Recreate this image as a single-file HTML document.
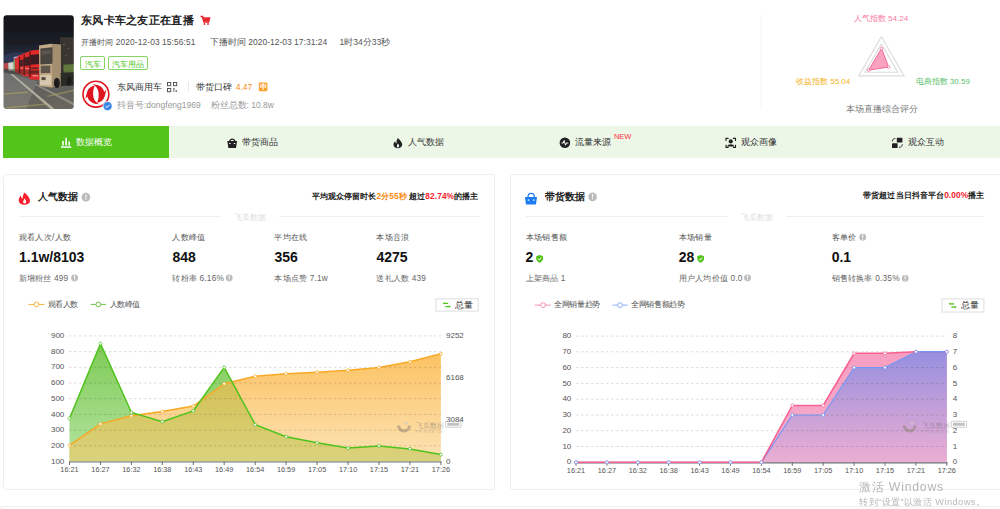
<!DOCTYPE html>
<html><head><meta charset="utf-8">
<style>
*{margin:0;padding:0;box-sizing:border-box}
html,body{width:1000px;height:509px;overflow:hidden;background:#fff;font-family:"Liberation Sans", sans-serif;color:#333}
.a{position:absolute;white-space:nowrap;line-height:1}
svg{position:absolute;left:0;top:0}
svg text{font-family:"Liberation Sans", sans-serif}
.ax{font-size:7.3px;fill:#555}
.ay{font-size:8px;fill:#555}
.wm{font-size:7.4px;letter-spacing:0.2px;fill:#777;fill-opacity:0.55}
.wm2{font-size:3.2px;letter-spacing:1.2px;fill:#888;fill-opacity:0.5}
.card{position:absolute;border:1px solid #efefef;border-radius:3px;background:#fff}
.tabs{position:absolute;left:3px;top:126px;width:997px;height:32px;background:#edf7e8}
.tab{position:absolute;top:0;height:32px;width:166.17px}
.t85{font-size:8.5px}
.lbl{font-size:8.3px;letter-spacing:0.35px;color:#555}
.val{font-size:14px;font-weight:bold;color:#111}
.sub{font-size:8.3px;letter-spacing:0.2px;color:#666}
.leg{font-size:7.6px;letter-spacing:-0.4px;color:#555}
</style></head><body>
<!-- cards -->
<div class="card" style="left:3px;top:173.5px;width:491.5px;height:316.5px"></div>
<div class="card" style="left:509.8px;top:173.5px;width:492px;height:316.5px"></div>
<div class="card" style="left:0px;top:505.5px;width:1002px;height:30px"></div>
<!-- tabs -->
<div class="tabs">
 <div class="tab" style="left:0;background:#52c41a"></div>
</div>
<svg width="1000" height="509" viewBox="0 0 1000 509">
<defs>
<filter id="blr" x="-0.1" y="-0.1" width="1.2" height="1.2"><feGaussianBlur stdDeviation="5"/></filter>
<clipPath id="ph"><rect x="3.5" y="15.2" width="70.3" height="93.8" rx="3"/></clipPath>
<linearGradient id="sky" x1="0" y1="-180" x2="0" y2="200" gradientUnits="userSpaceOnUse"><stop offset="0" stop-color="#141519"/><stop offset="0.5" stop-color="#1a1c24"/><stop offset="0.85" stop-color="#282e40"/><stop offset="1" stop-color="#3a4460"/></linearGradient>
<linearGradient id="gnd" x1="0" y1="200" x2="0" y2="510" gradientUnits="userSpaceOnUse"><stop offset="0" stop-color="#56585a"/><stop offset="1" stop-color="#6a675e"/></linearGradient>
</defs>
<g clip-path="url(#ph)"><g transform="translate(3,40) scale(0.137363)" filter="url(#blr)">
<rect x="-20" y="-200" width="560" height="720" fill="url(#sky)"/>
<ellipse cx="110" cy="130" rx="110" ry="40" fill="#3a4a78" fill-opacity="0.45"/>
<ellipse cx="110" cy="130" rx="35" ry="12" fill="#c8d8ff" fill-opacity="0.75"/>
<path d="M-20,200 L540,230 L540,520 L-20,520Z" fill="url(#gnd)"/>
<path d="M-20,220 L250,300 L160,520 L-20,520Z" fill="#8c8c88" fill-opacity="0.45"/>
<path d="M55,250 L70,248 L385,510 L355,510Z" fill="#d0ccb8" fill-opacity="0.7"/>
<path d="M230,325 L245,320 L540,470 L540,490Z" fill="#c0bca8" fill-opacity="0.45"/>
<path d="M-20,390 L180,375 L182,385 L-20,400Z" fill="#b6a660" fill-opacity="0.55"/>
<path d="M20,490 L320,460 L322,470 L20,500Z" fill="#b6a660" fill-opacity="0.55"/>
<path d="M320,405 L540,355 L540,367 L325,415Z" fill="#b6a660" fill-opacity="0.5"/>
<rect x="415" y="-20" width="125" height="350" fill="#3a3631"/>
<rect x="440" y="30" width="8" height="8" fill="#8a8470"/><rect x="470" y="60" width="8" height="8" fill="#7a7460"/><rect x="455" y="110" width="8" height="8" fill="#7a7460"/>
<path d="M440,180 L540,175 L540,255 L440,250Z" fill="#6a8a40" fill-opacity="0.8"/>
<path d="M5,170 L40,165 L42,215 L5,215Z" fill="#b84848"/>
<path d="M38,165 L78,160 L80,222 L40,222Z" fill="#d8d8d0"/>
<path d="M75,150 L88,140 L90,230 L78,228Z" fill="#7ab070"/>
<path d="M85,132 L118,122 L120,240 L88,236Z" fill="#d83030"/>
<path d="M108,115 L152,102 L155,252 L112,248Z" fill="#dd2c2c"/>
<path d="M140,100 L198,82 L200,268 L145,262Z" fill="#e02e2e"/>
<path d="M188,78 L275,70 L275,292 L192,285Z" fill="#e22a2a"/>
<path d="M120,150 L150,142 L150,190 L120,195Z" fill="#4a2228"/>
<path d="M150,130 L195,120 L195,185 L152,190Z" fill="#3e2024"/>
<path d="M198,110 L268,102 L268,175 L198,180Z" fill="#3a1e22"/>
<path d="M195,225 L270,222 L270,240 L195,242Z" fill="#8a1c1c"/>
<path d="M116,125 L124,122 L124,245 L116,242Z" fill="#5a1818"/>
<path d="M150,104 L158,100 L158,258 L150,255Z" fill="#5a1818"/>
<path d="M192,82 L200,80 L200,272 L192,270Z" fill="#4a1414"/>
<rect x="125" y="200" width="22" height="8" fill="#f0c8c0" fill-opacity="0.5"/>
<rect x="160" y="205" width="30" height="9" fill="#f0c8c0" fill-opacity="0.5"/>
<rect x="205" y="200" width="55" height="12" fill="#6a2020"/>
<rect x="215" y="255" width="40" height="10" fill="#f8e0d0" fill-opacity="0.55"/>
<path d="M-20,205 L540,235 L540,270 L-20,240Z" fill="#2a2a2a" fill-opacity="0.35"/>
<path d="M262,40 L350,28 L420,35 L420,330 L350,345 L265,335Z" fill="#c2aa88"/>
<path d="M355,30 L420,35 L420,330 L357,345Z" fill="#a48e70"/>
<path d="M272,62 L360,52 L360,172 L272,178Z" fill="#4a4440"/><path d="M280,80 L350,72 L350,100 L280,105Z" fill="#6a625a" fill-opacity="0.6"/>
<path d="M275,188 L345,185 L345,240 L275,242Z" fill="#5e564c"/>
<path d="M270,258 L352,255 L352,330 L270,328Z" fill="#d6c8ae"/>
<rect x="280" y="270" width="30" height="22" fill="#5a4c42"/>
<path d="M420,240 L540,235 L540,330 L420,335Z" fill="#2a2b28"/>
<ellipse cx="392" cy="312" rx="22" ry="38" fill="#1a1a1a"/>
<ellipse cx="480" cy="300" rx="18" ry="32" fill="#1e1e1e"/>
</g></g>
<path d="M200.5,16.5 L202.5,16.5 L204,22 L208.5,22 L209.5,18 L203,18" fill="none" stroke="#e8262c" stroke-width="1.6"/><circle cx="204.5" cy="24" r="0.9" fill="#e8262c"/><circle cx="208" cy="24" r="0.9" fill="#e8262c"/><rect x="203.3" y="18.2" width="5.6" height="3.2" fill="#e8262c"/>
<circle cx="95.9" cy="94.2" r="12.9" fill="#fff" stroke="#e0141e" stroke-width="1.6"/>
<g transform="translate(95.9,94.2)" fill="#e0141e"><path d="M-3.2,-10 C3,-9.8 7.6,-6.8 8.4,-2.2 L10.6,-4.6 L8.8,2.2 C7.6,6 4.5,8.2 1,8.6 C2.8,5.5 3,1.5 2.6,-2 C2.2,-5.5 0,-8.5 -3.2,-10Z"/><path d="M3.2,10 C-3,9.8 -7.6,6.8 -8.4,2.2 L-10.6,4.6 L-8.8,-2.2 C-7.6,-6 -4.5,-8.2 -1,-8.6 C-2.8,-5.5 -3,-1.5 -2.6,2 C-2.2,5.5 0,8.5 3.2,10Z"/></g>
<circle cx="107.6" cy="106.1" r="4.6" fill="#3a86e8" stroke="#fff" stroke-width="0.8"/><path d="M105.5,106.1 L107,107.5 L109.6,104.8" fill="none" stroke="#fff" stroke-width="1"/>
<rect x="167.5" y="82.5" width="3.2" height="3.2" fill="none" stroke="#555" stroke-width="1"/><rect x="173.5" y="82.5" width="3.2" height="3.2" fill="none" stroke="#555" stroke-width="1"/><rect x="167.5" y="88.5" width="3.2" height="3.2" fill="none" stroke="#555" stroke-width="1"/><rect x="173.2" y="88.2" width="1.5" height="1.5" fill="#555"/><rect x="175.5" y="90.3" width="1.5" height="1.5" fill="#555"/><rect x="173.2" y="90.5" width="1.2" height="1.3" fill="#555"/>
<rect x="188" y="82" width="0.8" height="10" fill="#e3e3e3"/>
<rect x="258.8" y="82.6" width="8.6" height="8.6" rx="1" fill="#fca130"/>
<rect x="760.6" y="15" width="0.8" height="95" fill="#f0f0f0"/>
<polygon points="881.40,36.60 858.71,75.90 904.09,75.90" fill="none" stroke="#dcdcdc" stroke-width="1.1"/>
<polygon points="881.40,43.94 865.06,72.23 897.74,72.23" fill="none" stroke="#dcdcdc" stroke-width="1.1"/>
<polygon points="881.5,48.4 868.7,70.1 888.6,67.0" fill="#f784aa" fill-opacity="0.75" stroke="#f5679a" stroke-width="1"/>
<circle cx="881.5" cy="48.4" r="1.3" fill="#fff" stroke="#f5679a" stroke-width="0.7"/>
<circle cx="868.7" cy="70.1" r="1.3" fill="#fff" stroke="#f5679a" stroke-width="0.7"/>
<circle cx="888.6" cy="67.0" r="1.3" fill="#fff" stroke="#f5679a" stroke-width="0.7"/>
<g fill="#fff"><rect x="61" y="146.3" width="10.2" height="1.5"/><rect x="62.2" y="141" width="1.6" height="4.5"/><rect x="65.3" y="137.8" width="1.6" height="7.7"/><rect x="68.4" y="141.5" width="1.6" height="4"/></g>
<path d="M229.5,141 A3,3.2 0 0 1 235,141" fill="none" stroke="#222" stroke-width="1.1"/><path d="M227.3,141 L237.1,141 L236,148 L228.4,148Z" fill="#222"/><rect x="229.2" y="143" width="1.4" height="1" fill="#fff"/><rect x="233.8" y="143" width="1.4" height="1" fill="#fff"/>
<path d="M397.8,138 C401,141 402.5,143 402.2,145 C402,147 400,148.2 397.8,148.2 C395.5,148.2 393.5,147 393.5,144.8 C393.5,143 394.5,142 395.3,141.3 C395.3,142.5 395.8,143.3 396.5,143.5 C396.3,141.8 396.8,139.5 397.8,138Z" fill="#222"/><path d="M397.9,143.5 C399,145 399.3,146 398.9,147 C398.5,147.6 397.3,147.6 397,147 C396.6,146.2 397.2,145 397.9,143.5Z" fill="#fff"/>
<circle cx="564.9" cy="142.8" r="5.3" fill="#222"/><path d="M561.5,143 L563.3,143 L564.2,140.5 L565.5,145.2 L566.4,143 L568.3,143" fill="none" stroke="#fff" stroke-width="1"/>
<g fill="none" stroke="#222" stroke-width="1.1"><path d="M726,141 L726,138.4 L728.6,138.4"/><path d="M732.9,138.4 L735.5,138.4 L735.5,141"/><path d="M726,144.8 L726,147.4 L728.6,147.4"/><path d="M732.9,147.4 L735.5,147.4 L735.5,144.8"/></g><circle cx="730.75" cy="141.4" r="2.1" fill="#222"/><path d="M727.3,146.6 C727.5,143.6 734,143.6 734.2,146.6Z" fill="#222"/>
<g fill="#222"><rect x="896.8" y="137.8" width="5.6" height="4.8" rx="0.6"/><rect x="892" y="143.2" width="5.6" height="4.8" rx="0.6"/></g><g fill="none" stroke="#222" stroke-width="0.9"><path d="M892.3,141.5 C892.5,139.3 893.5,138.5 895.4,138.5"/><path d="M902.3,144.2 C902.1,146.5 901,147.3 899,147.3"/></g>
<path d="M24.5,192.4 C28.5,196 30.2,198.5 30,201 C29.8,203.5 27.5,204.8 24.5,204.8 C21.5,204.8 18.8,203.3 18.7,200.3 C18.6,198 20,196.5 21,195.5 C21,197.3 21.8,198.4 22.8,198.6 C22.5,196.3 23.2,193.8 24.5,192.4Z" fill="#f5222d"/><path d="M24.6,198.5 C26,200.3 26.4,201.6 26,202.8 C25.6,203.7 23.8,203.7 23.3,202.8 C22.8,201.8 23.5,200.3 24.6,198.5Z" fill="#fff"/>
<circle cx="85.9" cy="197.2" r="4.35" fill="#bbb"/><rect x="85.40" y="194.60" width="1.1" height="3.2" fill="#fff"/><rect x="85.40" y="198.50" width="1.1" height="1.2" fill="#fff"/>
<path d="M528,197 A3.2,3.6 0 0 1 534.4,197" fill="none" stroke="#1d7cf2" stroke-width="1.2"/><path d="M525,197 L537,197 L536,204.5 L526,204.5Z" fill="#1d7cf2"/><rect x="527.8" y="199.5" width="1.5" height="1.2" fill="#fff"/><rect x="533" y="199.5" width="1.5" height="1.2" fill="#fff"/>
<circle cx="592.6" cy="196.8" r="4.35" fill="#bbb"/><rect x="592.00" y="194.20" width="1.1" height="3.2" fill="#fff"/><rect x="592.00" y="198.10" width="1.1" height="1.2" fill="#fff"/>
<circle cx="74.6" cy="278.0" r="3.40" fill="#bbb"/><rect x="74.05" y="275.40" width="1.1" height="3.2" fill="#fff"/><rect x="74.05" y="279.30" width="1.1" height="1.2" fill="#fff"/>
<circle cx="229.2" cy="278.0" r="3.40" fill="#bbb"/><rect x="228.65" y="275.40" width="1.1" height="3.2" fill="#fff"/><rect x="228.65" y="279.30" width="1.1" height="1.2" fill="#fff"/>
<circle cx="862.7" cy="237.2" r="3.40" fill="#bbb"/><rect x="862.15" y="234.60" width="1.1" height="3.2" fill="#fff"/><rect x="862.15" y="238.50" width="1.1" height="1.2" fill="#fff"/>
<circle cx="747.5" cy="277.8" r="3.40" fill="#bbb"/><rect x="746.95" y="275.20" width="1.1" height="3.2" fill="#fff"/><rect x="746.95" y="279.10" width="1.1" height="1.2" fill="#fff"/>
<circle cx="905.2" cy="278.3" r="3.40" fill="#bbb"/><rect x="904.65" y="275.70" width="1.1" height="3.2" fill="#fff"/><rect x="904.65" y="279.60" width="1.1" height="1.2" fill="#fff"/>
<path d="M536.2,256.3 L539.6,255 L543.0,256.3 L543.0,258.8 C543.0,260.8 541.0,262.2 539.6,262.8 C538.2,262.2 536.2,260.8 536.2,258.8Z" fill="#52c41a"/><path d="M537.9000000000001,258.8 L539.2,260 L541.3000000000001,257.6" fill="none" stroke="#fff" stroke-width="0.9"/>
<path d="M697.2,256.3 L700.6,255 L704.0,256.3 L704.0,258.8 C704.0,260.8 702.0,262.2 700.6,262.8 C699.2,262.2 697.2,260.8 697.2,258.8Z" fill="#52c41a"/><path d="M698.9000000000001,258.8 L700.2,260 L702.3000000000001,257.6" fill="none" stroke="#fff" stroke-width="0.9"/>
<line x1="28.4" y1="304.4" x2="44.5" y2="304.4" stroke="#f7b13c" stroke-width="1"/><circle cx="36.5" cy="304.4" r="2.4" fill="#fff" stroke="#f7b13c" stroke-width="1"/>
<line x1="90.7" y1="304.4" x2="106.1" y2="304.4" stroke="#6cc644" stroke-width="1"/><circle cx="98.4" cy="304.4" r="2.4" fill="#fff" stroke="#6cc644" stroke-width="1"/>
<line x1="534.7" y1="305.1" x2="550.8" y2="305.1" stroke="#f48fb1" stroke-width="1"/><circle cx="543.1" cy="305.1" r="2.4" fill="#fff" stroke="#f48fb1" stroke-width="1"/>
<line x1="612.4" y1="305.1" x2="627.8" y2="305.1" stroke="#8fb0f5" stroke-width="1"/><circle cx="620.1" cy="305.1" r="2.4" fill="#fff" stroke="#8fb0f5" stroke-width="1"/>
<rect x="436.0" y="298.8" width="42.2" height="12.3" fill="#fff" stroke="#dedede" stroke-width="1"/>
<path d="M443.8,303.34999999999997 L448.2,303.34999999999997 M445.4,306.55 L449.6,306.55" fill="none" stroke="#52c41a" stroke-width="1.3"/><path d="M442.6,303.34999999999997 L444.4,302.15 L444.4,304.55Z M450.8,306.55 L449.0,305.34999999999997 L449.0,307.75Z" fill="#52c41a"/>
<rect x="942.0" y="298.9" width="41.9" height="13.1" fill="#fff" stroke="#dedede" stroke-width="1"/>
<path d="M949.8,303.84999999999997 L954.2,303.84999999999997 M951.4,307.05 L955.6,307.05" fill="none" stroke="#52c41a" stroke-width="1.3"/><path d="M948.6,303.84999999999997 L950.4,302.65 L950.4,305.05Z M956.8,307.05 L955.0,305.84999999999997 L955.0,308.25Z" fill="#52c41a"/>
<defs>
<linearGradient id="oA" x1="0" y1="350" x2="0" y2="461" gradientUnits="userSpaceOnUse">
 <stop offset="0" stop-color="#fcc160"/><stop offset="1" stop-color="#fde3b5"/></linearGradient>
<linearGradient id="gA" x1="0" y1="343" x2="0" y2="461" gradientUnits="userSpaceOnUse">
 <stop offset="0" stop-color="#7dcb55"/><stop offset="1" stop-color="#b5e3a0"/></linearGradient>
<linearGradient id="ogA" x1="0" y1="367" x2="0" y2="461" gradientUnits="userSpaceOnUse">
 <stop offset="0" stop-color="#d2bd4e"/><stop offset="1" stop-color="#dad27c"/></linearGradient>
<linearGradient id="pA" x1="0" y1="351" x2="0" y2="462" gradientUnits="userSpaceOnUse">
 <stop offset="0" stop-color="#f79ec0"/><stop offset="1" stop-color="#f4acd0"/></linearGradient>
<linearGradient id="bA" x1="0" y1="351" x2="0" y2="462" gradientUnits="userSpaceOnUse">
 <stop offset="0" stop-color="#968fe0"/><stop offset="1" stop-color="#ebaed2"/></linearGradient>

<clipPath id="clipG"><path d="M69.5,418.5 L100.5,343.6 L131.4,412.5 L162.3,421.6 L193.3,410.9 L224.2,367.4 L255.2,424.7 L286.1,436.7 L317.1,442.7 L348.1,448.1 L379.0,446.0 L409.9,448.9 L440.9,454.6 L440.9,461.5 L69.5,461.5 Z"/></clipPath></defs>
<path d="M69.5,445.4 L100.5,423.9 L131.4,415.7 L162.3,411.5 L193.3,406.0 L224.2,383.7 L255.2,376.3 L286.1,373.7 L317.1,372.2 L348.1,370.3 L379.0,367.5 L409.9,361.8 L440.9,353.7 L440.9,461.5 L69.5,461.5 Z" fill="url(#oA)"/>
<path d="M69.5,418.5 L100.5,343.6 L131.4,412.5 L162.3,421.6 L193.3,410.9 L224.2,367.4 L255.2,424.7 L286.1,436.7 L317.1,442.7 L348.1,448.1 L379.0,446.0 L409.9,448.9 L440.9,454.6 L440.9,461.5 L69.5,461.5 Z" fill="url(#gA)"/>
<path d="M69.5,445.4 L100.5,423.9 L131.4,415.7 L162.3,411.5 L193.3,406.0 L224.2,383.7 L255.2,376.3 L286.1,373.7 L317.1,372.2 L348.1,370.3 L379.0,367.5 L409.9,361.8 L440.9,353.7 L440.9,461.5 L69.5,461.5 Z" fill="url(#ogA)" clip-path="url(#clipG)"/>
<line x1="69" y1="445.8" x2="441" y2="445.8" stroke="#000" stroke-opacity="0.14" stroke-width="1" stroke-dasharray="2.5 2.5"/>
<line x1="69" y1="430.1" x2="441" y2="430.1" stroke="#000" stroke-opacity="0.14" stroke-width="1" stroke-dasharray="2.5 2.5"/>
<line x1="69" y1="414.4" x2="441" y2="414.4" stroke="#000" stroke-opacity="0.14" stroke-width="1" stroke-dasharray="2.5 2.5"/>
<line x1="69" y1="398.7" x2="441" y2="398.7" stroke="#000" stroke-opacity="0.14" stroke-width="1" stroke-dasharray="2.5 2.5"/>
<line x1="69" y1="383.0" x2="441" y2="383.0" stroke="#000" stroke-opacity="0.14" stroke-width="1" stroke-dasharray="2.5 2.5"/>
<line x1="69" y1="367.3" x2="441" y2="367.3" stroke="#000" stroke-opacity="0.14" stroke-width="1" stroke-dasharray="2.5 2.5"/>
<line x1="69" y1="351.6" x2="441" y2="351.6" stroke="#000" stroke-opacity="0.14" stroke-width="1" stroke-dasharray="2.5 2.5"/>
<line x1="69" y1="335.9" x2="441" y2="335.9" stroke="#000" stroke-opacity="0.14" stroke-width="1" stroke-dasharray="2.5 2.5"/>
<path d="M69.5,445.4 L100.5,423.9 L131.4,415.7 L162.3,411.5 L193.3,406.0 L224.2,383.7 L255.2,376.3 L286.1,373.7 L317.1,372.2 L348.1,370.3 L379.0,367.5 L409.9,361.8 L440.9,353.7" fill="none" stroke="#f9a825" stroke-width="1.4"/>
<path d="M69.5,418.5 L100.5,343.6 L131.4,412.5 L162.3,421.6 L193.3,410.9 L224.2,367.4 L255.2,424.7 L286.1,436.7 L317.1,442.7 L348.1,448.1 L379.0,446.0 L409.9,448.9 L440.9,454.6" fill="none" stroke="#4fc21c" stroke-width="1.5"/>
<circle cx="69.5" cy="445.4" r="1.5" fill="#fff" stroke="#f7a823" stroke-width="0.7"/>
<circle cx="100.5" cy="423.9" r="1.5" fill="#fff" stroke="#f7a823" stroke-width="0.7"/>
<circle cx="131.4" cy="415.7" r="1.5" fill="#fff" stroke="#f7a823" stroke-width="0.7"/>
<circle cx="162.3" cy="411.5" r="1.5" fill="#fff" stroke="#f7a823" stroke-width="0.7"/>
<circle cx="193.3" cy="406.0" r="1.5" fill="#fff" stroke="#f7a823" stroke-width="0.7"/>
<circle cx="224.2" cy="383.7" r="1.5" fill="#fff" stroke="#f7a823" stroke-width="0.7"/>
<circle cx="255.2" cy="376.3" r="1.5" fill="#fff" stroke="#f7a823" stroke-width="0.7"/>
<circle cx="286.1" cy="373.7" r="1.5" fill="#fff" stroke="#f7a823" stroke-width="0.7"/>
<circle cx="317.1" cy="372.2" r="1.5" fill="#fff" stroke="#f7a823" stroke-width="0.7"/>
<circle cx="348.1" cy="370.3" r="1.5" fill="#fff" stroke="#f7a823" stroke-width="0.7"/>
<circle cx="379.0" cy="367.5" r="1.5" fill="#fff" stroke="#f7a823" stroke-width="0.7"/>
<circle cx="409.9" cy="361.8" r="1.5" fill="#fff" stroke="#f7a823" stroke-width="0.7"/>
<circle cx="440.9" cy="353.7" r="1.5" fill="#fff" stroke="#f7a823" stroke-width="0.7"/>
<circle cx="69.5" cy="418.5" r="1.5" fill="#fff" stroke="#4cbb1f" stroke-width="0.7"/>
<circle cx="100.5" cy="343.6" r="1.5" fill="#fff" stroke="#4cbb1f" stroke-width="0.7"/>
<circle cx="131.4" cy="412.5" r="1.5" fill="#fff" stroke="#4cbb1f" stroke-width="0.7"/>
<circle cx="162.3" cy="421.6" r="1.5" fill="#fff" stroke="#4cbb1f" stroke-width="0.7"/>
<circle cx="193.3" cy="410.9" r="1.5" fill="#fff" stroke="#4cbb1f" stroke-width="0.7"/>
<circle cx="224.2" cy="367.4" r="1.5" fill="#fff" stroke="#4cbb1f" stroke-width="0.7"/>
<circle cx="255.2" cy="424.7" r="1.5" fill="#fff" stroke="#4cbb1f" stroke-width="0.7"/>
<circle cx="286.1" cy="436.7" r="1.5" fill="#fff" stroke="#4cbb1f" stroke-width="0.7"/>
<circle cx="317.1" cy="442.7" r="1.5" fill="#fff" stroke="#4cbb1f" stroke-width="0.7"/>
<circle cx="348.1" cy="448.1" r="1.5" fill="#fff" stroke="#4cbb1f" stroke-width="0.7"/>
<circle cx="379.0" cy="446.0" r="1.5" fill="#fff" stroke="#4cbb1f" stroke-width="0.7"/>
<circle cx="409.9" cy="448.9" r="1.5" fill="#fff" stroke="#4cbb1f" stroke-width="0.7"/>
<circle cx="440.9" cy="454.6" r="1.5" fill="#fff" stroke="#4cbb1f" stroke-width="0.7"/>
<line x1="69" y1="462.0" x2="441.5" y2="462.0" stroke="#6e7079" stroke-width="1.2"/>
<line x1="69.5" y1="461.5" x2="69.5" y2="465.0" stroke="#6e7079" stroke-width="1"/>
<line x1="100.5" y1="461.5" x2="100.5" y2="465.0" stroke="#6e7079" stroke-width="1"/>
<line x1="131.4" y1="461.5" x2="131.4" y2="465.0" stroke="#6e7079" stroke-width="1"/>
<line x1="162.3" y1="461.5" x2="162.3" y2="465.0" stroke="#6e7079" stroke-width="1"/>
<line x1="193.3" y1="461.5" x2="193.3" y2="465.0" stroke="#6e7079" stroke-width="1"/>
<line x1="224.2" y1="461.5" x2="224.2" y2="465.0" stroke="#6e7079" stroke-width="1"/>
<line x1="255.2" y1="461.5" x2="255.2" y2="465.0" stroke="#6e7079" stroke-width="1"/>
<line x1="286.1" y1="461.5" x2="286.1" y2="465.0" stroke="#6e7079" stroke-width="1"/>
<line x1="317.1" y1="461.5" x2="317.1" y2="465.0" stroke="#6e7079" stroke-width="1"/>
<line x1="348.1" y1="461.5" x2="348.1" y2="465.0" stroke="#6e7079" stroke-width="1"/>
<line x1="379.0" y1="461.5" x2="379.0" y2="465.0" stroke="#6e7079" stroke-width="1"/>
<line x1="409.9" y1="461.5" x2="409.9" y2="465.0" stroke="#6e7079" stroke-width="1"/>
<line x1="440.9" y1="461.5" x2="440.9" y2="465.0" stroke="#6e7079" stroke-width="1"/>
<text x="64.3" y="463.6" text-anchor="end" class="ay">100</text>
<text x="64.3" y="447.9" text-anchor="end" class="ay">200</text>
<text x="64.3" y="432.2" text-anchor="end" class="ay">300</text>
<text x="64.3" y="416.5" text-anchor="end" class="ay">400</text>
<text x="64.3" y="400.8" text-anchor="end" class="ay">500</text>
<text x="64.3" y="385.1" text-anchor="end" class="ay">600</text>
<text x="64.3" y="369.4" text-anchor="end" class="ay">700</text>
<text x="64.3" y="353.7" text-anchor="end" class="ay">800</text>
<text x="64.3" y="338.0" text-anchor="end" class="ay">900</text>
<text x="446" y="338.0" class="ay">9252</text>
<text x="446" y="379.9" class="ay">6168</text>
<text x="446" y="421.7" class="ay">3084</text>
<text x="446" y="463.6" class="ay">0</text>
<text x="69.5" y="472.3" text-anchor="middle" class="ax">16:21</text>
<text x="100.5" y="472.3" text-anchor="middle" class="ax">16:27</text>
<text x="131.4" y="472.3" text-anchor="middle" class="ax">16:32</text>
<text x="162.3" y="472.3" text-anchor="middle" class="ax">16:38</text>
<text x="193.3" y="472.3" text-anchor="middle" class="ax">16:43</text>
<text x="224.2" y="472.3" text-anchor="middle" class="ax">16:49</text>
<text x="255.2" y="472.3" text-anchor="middle" class="ax">16:54</text>
<text x="286.1" y="472.3" text-anchor="middle" class="ax">16:59</text>
<text x="317.1" y="472.3" text-anchor="middle" class="ax">17:05</text>
<text x="348.1" y="472.3" text-anchor="middle" class="ax">17:10</text>
<text x="379.0" y="472.3" text-anchor="middle" class="ax">17:15</text>
<text x="409.9" y="472.3" text-anchor="middle" class="ax">17:21</text>
<text x="440.9" y="472.3" text-anchor="middle" class="ax">17:26</text>
<path d="M576.0,462.3 L606.9,462.3 L637.8,462.3 L668.7,462.3 L699.6,462.3 L730.5,462.3 L761.4,462.3 L792.3,405.4 L823.2,405.4 L854.1,353.3 L885.0,353.3 L915.9,351.8 L946.8,351.8 L946.8,462.3 L576.0,462.3 Z" fill="url(#pA)"/>
<path d="M576.0,462.3 L606.9,462.3 L637.8,462.3 L668.7,462.3 L699.6,462.3 L730.5,462.3 L761.4,462.3 L792.3,415.0 L823.2,415.0 L854.1,367.6 L885.0,367.6 L915.9,351.8 L946.8,351.8 L946.8,462.3 L576.0,462.3 Z" fill="url(#bA)"/>
<line x1="576" y1="446.5" x2="947" y2="446.5" stroke="#000" stroke-opacity="0.14" stroke-width="1" stroke-dasharray="2.5 2.5"/>
<line x1="576" y1="430.7" x2="947" y2="430.7" stroke="#000" stroke-opacity="0.14" stroke-width="1" stroke-dasharray="2.5 2.5"/>
<line x1="576" y1="415.0" x2="947" y2="415.0" stroke="#000" stroke-opacity="0.14" stroke-width="1" stroke-dasharray="2.5 2.5"/>
<line x1="576" y1="399.2" x2="947" y2="399.2" stroke="#000" stroke-opacity="0.14" stroke-width="1" stroke-dasharray="2.5 2.5"/>
<line x1="576" y1="383.4" x2="947" y2="383.4" stroke="#000" stroke-opacity="0.14" stroke-width="1" stroke-dasharray="2.5 2.5"/>
<line x1="576" y1="367.6" x2="947" y2="367.6" stroke="#000" stroke-opacity="0.14" stroke-width="1" stroke-dasharray="2.5 2.5"/>
<line x1="576" y1="351.8" x2="947" y2="351.8" stroke="#000" stroke-opacity="0.14" stroke-width="1" stroke-dasharray="2.5 2.5"/>
<line x1="576" y1="336.1" x2="947" y2="336.1" stroke="#000" stroke-opacity="0.14" stroke-width="1" stroke-dasharray="2.5 2.5"/>
<line x1="576" y1="462.8" x2="947.5" y2="462.8" stroke="#6e7079" stroke-width="1.2"/>
<line x1="576.0" y1="462.3" x2="576.0" y2="465.8" stroke="#6e7079" stroke-width="1"/>
<line x1="606.9" y1="462.3" x2="606.9" y2="465.8" stroke="#6e7079" stroke-width="1"/>
<line x1="637.8" y1="462.3" x2="637.8" y2="465.8" stroke="#6e7079" stroke-width="1"/>
<line x1="668.7" y1="462.3" x2="668.7" y2="465.8" stroke="#6e7079" stroke-width="1"/>
<line x1="699.6" y1="462.3" x2="699.6" y2="465.8" stroke="#6e7079" stroke-width="1"/>
<line x1="730.5" y1="462.3" x2="730.5" y2="465.8" stroke="#6e7079" stroke-width="1"/>
<line x1="761.4" y1="462.3" x2="761.4" y2="465.8" stroke="#6e7079" stroke-width="1"/>
<line x1="792.3" y1="462.3" x2="792.3" y2="465.8" stroke="#6e7079" stroke-width="1"/>
<line x1="823.2" y1="462.3" x2="823.2" y2="465.8" stroke="#6e7079" stroke-width="1"/>
<line x1="854.1" y1="462.3" x2="854.1" y2="465.8" stroke="#6e7079" stroke-width="1"/>
<line x1="885.0" y1="462.3" x2="885.0" y2="465.8" stroke="#6e7079" stroke-width="1"/>
<line x1="915.9" y1="462.3" x2="915.9" y2="465.8" stroke="#6e7079" stroke-width="1"/>
<line x1="946.8" y1="462.3" x2="946.8" y2="465.8" stroke="#6e7079" stroke-width="1"/>
<path d="M576.0,462.3 L606.9,462.3 L637.8,462.3 L668.7,462.3 L699.6,462.3 L730.5,462.3 L761.4,462.3 L792.3,415.0 L823.2,415.0 L854.1,367.6 L885.0,367.6 L915.9,351.8 L946.8,351.8" fill="none" stroke="#7397f2" stroke-width="1.15"/>
<path d="M576.0,462.3 L606.9,462.3 L637.8,462.3 L668.7,462.3 L699.6,462.3 L730.5,462.3 L761.4,462.3 L792.3,405.4 L823.2,405.4 L854.1,353.3 L885.0,353.3 L915.9,351.8 L946.8,351.8" fill="none" stroke="#f7608f" stroke-width="1.5"/>
<path d="M915.9,351.8 L946.8,351.8" fill="none" stroke="#7397f2" stroke-width="1.5"/>
<circle cx="576.0" cy="462.3" r="1.5" fill="#fff" stroke="#f2689a" stroke-width="0.7"/>
<circle cx="606.9" cy="462.3" r="1.5" fill="#fff" stroke="#f2689a" stroke-width="0.7"/>
<circle cx="637.8" cy="462.3" r="1.5" fill="#fff" stroke="#f2689a" stroke-width="0.7"/>
<circle cx="668.7" cy="462.3" r="1.5" fill="#fff" stroke="#f2689a" stroke-width="0.7"/>
<circle cx="699.6" cy="462.3" r="1.5" fill="#fff" stroke="#f2689a" stroke-width="0.7"/>
<circle cx="730.5" cy="462.3" r="1.5" fill="#fff" stroke="#f2689a" stroke-width="0.7"/>
<circle cx="761.4" cy="462.3" r="1.5" fill="#fff" stroke="#f2689a" stroke-width="0.7"/>
<circle cx="792.3" cy="405.4" r="1.5" fill="#fff" stroke="#f2689a" stroke-width="0.7"/>
<circle cx="823.2" cy="405.4" r="1.5" fill="#fff" stroke="#f2689a" stroke-width="0.7"/>
<circle cx="854.1" cy="353.3" r="1.5" fill="#fff" stroke="#f2689a" stroke-width="0.7"/>
<circle cx="885.0" cy="353.3" r="1.5" fill="#fff" stroke="#f2689a" stroke-width="0.7"/>
<circle cx="915.9" cy="351.8" r="1.5" fill="#fff" stroke="#f2689a" stroke-width="0.7"/>
<circle cx="946.8" cy="351.8" r="1.5" fill="#fff" stroke="#f2689a" stroke-width="0.7"/>
<circle cx="576.0" cy="462.3" r="1.5" fill="#fff" stroke="#6a8df2" stroke-width="0.7"/>
<circle cx="606.9" cy="462.3" r="1.5" fill="#fff" stroke="#6a8df2" stroke-width="0.7"/>
<circle cx="637.8" cy="462.3" r="1.5" fill="#fff" stroke="#6a8df2" stroke-width="0.7"/>
<circle cx="668.7" cy="462.3" r="1.5" fill="#fff" stroke="#6a8df2" stroke-width="0.7"/>
<circle cx="699.6" cy="462.3" r="1.5" fill="#fff" stroke="#6a8df2" stroke-width="0.7"/>
<circle cx="730.5" cy="462.3" r="1.5" fill="#fff" stroke="#6a8df2" stroke-width="0.7"/>
<circle cx="761.4" cy="462.3" r="1.5" fill="#fff" stroke="#6a8df2" stroke-width="0.7"/>
<circle cx="792.3" cy="415.0" r="1.5" fill="#fff" stroke="#6a8df2" stroke-width="0.7"/>
<circle cx="823.2" cy="415.0" r="1.5" fill="#fff" stroke="#6a8df2" stroke-width="0.7"/>
<circle cx="854.1" cy="367.6" r="1.5" fill="#fff" stroke="#6a8df2" stroke-width="0.7"/>
<circle cx="885.0" cy="367.6" r="1.5" fill="#fff" stroke="#6a8df2" stroke-width="0.7"/>
<circle cx="915.9" cy="351.8" r="1.5" fill="#fff" stroke="#6a8df2" stroke-width="0.7"/>
<circle cx="946.8" cy="351.8" r="1.5" fill="#fff" stroke="#6a8df2" stroke-width="0.7"/>
<text x="571.3" y="464.4" text-anchor="end" class="ay">0</text>
<text x="952.8" y="464.4" class="ay">0</text>
<text x="571.3" y="448.6" text-anchor="end" class="ay">10</text>
<text x="952.8" y="448.6" class="ay">1</text>
<text x="571.3" y="432.8" text-anchor="end" class="ay">20</text>
<text x="952.8" y="432.8" class="ay">2</text>
<text x="571.3" y="417.1" text-anchor="end" class="ay">30</text>
<text x="952.8" y="417.1" class="ay">3</text>
<text x="571.3" y="401.3" text-anchor="end" class="ay">40</text>
<text x="952.8" y="401.3" class="ay">4</text>
<text x="571.3" y="385.5" text-anchor="end" class="ay">50</text>
<text x="952.8" y="385.5" class="ay">5</text>
<text x="571.3" y="369.7" text-anchor="end" class="ay">60</text>
<text x="952.8" y="369.7" class="ay">6</text>
<text x="571.3" y="353.9" text-anchor="end" class="ay">70</text>
<text x="952.8" y="353.9" class="ay">7</text>
<text x="571.3" y="338.2" text-anchor="end" class="ay">80</text>
<text x="952.8" y="338.2" class="ay">8</text>
<text x="576.0" y="472.9" text-anchor="middle" class="ax">16:21</text>
<text x="606.9" y="472.9" text-anchor="middle" class="ax">16:27</text>
<text x="637.8" y="472.9" text-anchor="middle" class="ax">16:32</text>
<text x="668.7" y="472.9" text-anchor="middle" class="ax">16:38</text>
<text x="699.6" y="472.9" text-anchor="middle" class="ax">16:43</text>
<text x="730.5" y="472.9" text-anchor="middle" class="ax">16:49</text>
<text x="761.4" y="472.9" text-anchor="middle" class="ax">16:54</text>
<text x="792.3" y="472.9" text-anchor="middle" class="ax">16:59</text>
<text x="823.2" y="472.9" text-anchor="middle" class="ax">17:05</text>
<text x="854.1" y="472.9" text-anchor="middle" class="ax">17:10</text>
<text x="885.0" y="472.9" text-anchor="middle" class="ax">17:15</text>
<text x="915.9" y="472.9" text-anchor="middle" class="ax">17:21</text>
<text x="946.8" y="472.9" text-anchor="middle" class="ax">17:26</text>
<path d="M398.6,425.5 A5.4,5.4 0 1 0 409.4,425.5" fill="none" stroke="#8a8070" stroke-opacity="0.5" stroke-width="3"/>
<circle cx="406.3" cy="423.3" r="1.5" fill="#ccc" fill-opacity="0.7"/>
<text x="415.8" y="427.8" class="wm">飞瓜数据</text>
<rect x="445.5" y="421.3" width="15.4" height="6" rx="0.8" fill="#fff" fill-opacity="0.35" stroke="#888" stroke-opacity="0.5" stroke-width="0.8"/>
<rect x="447.3" y="422.8" width="11.8" height="3" fill="#777" fill-opacity="0.45"/>
<text x="415.8" y="432.5" class="wm2">FEIGUA.CN</text>
<path d="M904.3,425.5 A5.4,5.4 0 1 0 915.1,425.5" fill="none" stroke="#8a8070" stroke-opacity="0.5" stroke-width="3"/>
<circle cx="912.0" cy="423.3" r="1.5" fill="#ccc" fill-opacity="0.7"/>
<text x="921.5" y="427.8" class="wm">飞瓜数据</text>
<rect x="951.2" y="421.3" width="15.4" height="6" rx="0.8" fill="#fff" fill-opacity="0.35" stroke="#888" stroke-opacity="0.5" stroke-width="0.8"/>
<rect x="953.0" y="422.8" width="11.8" height="3" fill="#777" fill-opacity="0.45"/>
<text x="921.5" y="432.5" class="wm2">FEIGUA.CN</text>
</svg>
<!-- header text -->
<div class="a" style="left:81px;top:15px;font-size:11.45px;letter-spacing:0.3px;font-weight:bold;color:#222">东风卡车之友正在直播</div>
<div class="a" style="left:81px;top:38px;color:#555;font-size:8.4px;letter-spacing:0.1px">开播时间 2020-12-03 15:56:51</div>
<div class="a t85" style="left:209.9px;top:37.8px;color:#555">下播时间 2020-12-03 17:31:24</div>
<div class="a t85" style="left:339.6px;top:37.8px;color:#555">1时34分33秒</div>
<div class="a" style="left:80.4px;top:56.2px;width:24.3px;height:13.6px;border:1.3px solid #86d466;border-radius:2px;color:#52c41a;font-size:8px;text-align:center;line-height:12.8px;padding-top:1.6px">汽车</div>
<div class="a" style="left:108px;top:56.2px;width:40px;height:13.6px;border:1.3px solid #86d466;border-radius:2px;color:#52c41a;font-size:8px;text-align:center;line-height:12.8px;padding-top:1.6px">汽车用品</div>
<div class="a t85" style="left:117px;top:82.5px;color:#333">东风商用车</div>
<div class="a t85" style="left:196.4px;top:82.5px;color:#333">带货口碑</div>
<div class="a t85" style="left:235.7px;top:82.5px;color:#fa8c16">4.47</div>
<div class="a" style="left:258.8px;top:83.2px;width:8.6px;font-size:7px;font-weight:bold;color:#fff;text-align:center">中</div>
<div class="a t85" style="left:117px;top:101.3px;color:#999">抖音号:dongfeng1969</div>
<div class="a t85" style="left:210.5px;top:101.3px;color:#999">粉丝总数: 10.8w</div>
<!-- radar labels -->
<div class="a" style="left:831px;top:15px;width:100px;text-align:center;font-size:8px;color:#f77ba3">人气指数 54.24</div>
<div class="a" style="left:796px;top:78px;font-size:8px;color:#f5b31c">收益指数 55.04</div>
<div class="a" style="left:915.6px;top:78px;font-size:8px;color:#5cc06c">电商指数 30.59</div>
<div class="a" style="left:846px;top:105px;font-size:8.8px;color:#777">本场直播综合评分</div>
<!-- tab labels -->
<div class="a" style="left:76.2px;top:138.2px;font-size:8.8px;color:#fff">数据概览</div>
<div class="a" style="left:242.4px;top:138.2px;font-size:8.8px;color:#333">带货商品</div>
<div class="a" style="left:408.4px;top:138.2px;font-size:8.8px;color:#333">人气数据</div>
<div class="a" style="left:574.8px;top:138.2px;font-size:8.8px;color:#333">流量来源</div>
<div class="a" style="left:613.9px;top:132.8px;font-size:7.5px;color:#ff3040">NEW</div>
<div class="a" style="left:741.2px;top:138.2px;font-size:8.8px;color:#333">观众画像</div>
<div class="a" style="left:907.6px;top:138.2px;font-size:8.8px;color:#333">观众互动</div>
<!-- card headers -->
<div class="a" style="left:38.4px;top:192px;font-size:10px;font-weight:bold;color:#222">人气数据</div>
<div class="a" style="left:545.2px;top:192px;font-size:10px;font-weight:bold;color:#222">带货数据</div>
<div class="a" style="left:200px;top:191.8px;width:278.4px;text-align:right;font-size:8.3px;letter-spacing:0.1px;font-weight:bold;color:#222">平均观众停留时长<span style="color:#fa8c16">2分55秒</span> 超过<span style="color:#f5222d">82.74%</span>的播主</div>
<div class="a" style="left:700px;top:191.2px;width:284.4px;text-align:right;font-size:8.3px;letter-spacing:0.1px;font-weight:bold;color:#222">带货超过当日抖音平台<span style="color:#f5222d">0.00%</span>播主</div>
<div class="a" style="left:18.6px;top:216.2px;width:202.6px;height:1.2px;background:#efefef"></div>
<div class="a" style="left:279px;top:216.2px;width:200px;height:1.2px;background:#efefef"></div>
<div class="a" style="left:233.8px;top:212.8px;font-size:8.3px;color:#ddd">飞瓜数据</div>
<div class="a" style="left:525.5px;top:216.2px;width:202px;height:1.2px;background:#efefef"></div>
<div class="a" style="left:785.8px;top:216.2px;width:198.6px;height:1.2px;background:#efefef"></div>
<div class="a" style="left:740.6px;top:212.8px;font-size:8.3px;color:#ddd">飞瓜数据</div>
<!-- metrics left -->
<div class="a lbl" style="left:18.7px;top:233px">观看人次/人数</div>
<div class="a val" style="left:19px;top:250px">1.1w/8103</div>
<div class="a sub" style="left:18.7px;top:273.8px">新增粉丝 499</div>
<div class="a lbl" style="left:172.4px;top:233px">人数峰值</div>
<div class="a val" style="left:172.4px;top:250px">848</div>
<div class="a sub" style="left:172.4px;top:273.8px">转粉率 6.16%</div>
<div class="a lbl" style="left:274.4px;top:233px">平均在线</div>
<div class="a val" style="left:274.4px;top:250px">356</div>
<div class="a sub" style="left:274.4px;top:273.8px">本场点赞 7.1w</div>
<div class="a lbl" style="left:376.4px;top:233px">本场音浪</div>
<div class="a val" style="left:376.4px;top:250px">4275</div>
<div class="a sub" style="left:376.4px;top:273.8px">送礼人数 439</div>
<!-- metrics right -->
<div class="a lbl" style="left:525.5px;top:233px">本场销售额</div>
<div class="a val" style="left:525.5px;top:250px">2</div>
<div class="a sub" style="left:525.5px;top:273.8px">上架商品 1</div>
<div class="a lbl" style="left:678.8px;top:233px">本场销量</div>
<div class="a val" style="left:678.8px;top:250px">28</div>
<div class="a sub" style="left:678.8px;top:273.8px">用户人均价值 0.0</div>
<div class="a lbl" style="left:831.7px;top:233px">客单价</div>
<div class="a val" style="left:831.7px;top:250px">0.1</div>
<div class="a sub" style="left:831.7px;top:273.8px">销售转换率 0.35%</div>
<!-- legends -->
<div class="a leg" style="left:47.7px;top:300.6px">观看人数</div>
<div class="a leg" style="left:109.6px;top:300.6px">人数峰值</div>
<div class="a leg" style="left:554.3px;top:301.3px">全网销量趋势</div>
<div class="a leg" style="left:631.3px;top:301.3px">全网销售额趋势</div>
<div class="a" style="left:455px;top:300.8px;font-size:8.5px;color:#333">总量</div>
<div class="a" style="left:961px;top:301.2px;font-size:8.5px;color:#333">总量</div>
<div class="a" style="left:859.2px;top:480.5px;font-size:12.3px;letter-spacing:0.75px;color:#aaa;opacity:.85">激活 Windows</div>
<div class="a" style="left:859.2px;top:497.5px;font-size:9.2px;letter-spacing:0.45px;color:#aaa;opacity:.85">转到“设置”以激活 Windows。</div>
</body></html>
